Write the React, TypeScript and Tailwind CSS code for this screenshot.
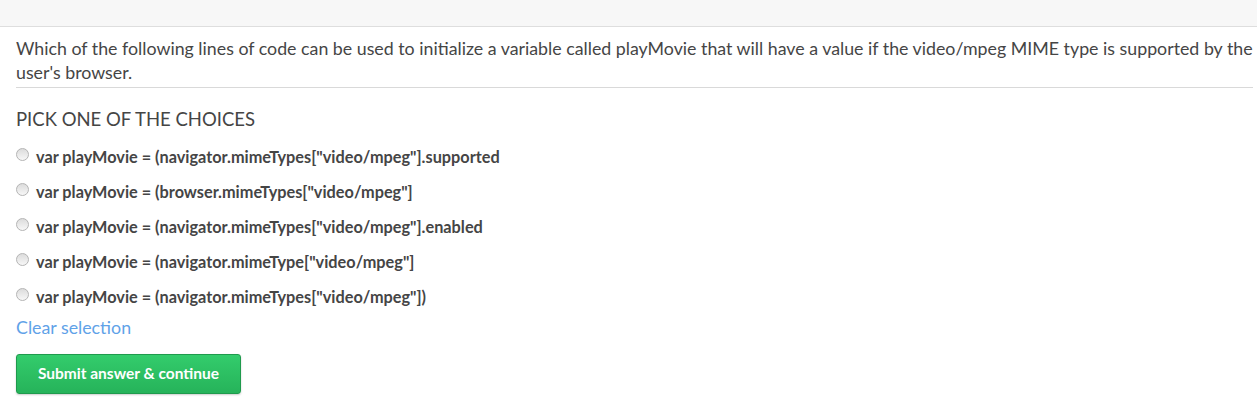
const choices = [
  'var playMovie = (navigator.mimeTypes["video/mpeg"].supported',
  'var playMovie = (browser.mimeTypes["video/mpeg"]',
  'var playMovie = (navigator.mimeTypes["video/mpeg"].enabled',
  'var playMovie = (navigator.mimeType["video/mpeg"]',
  'var playMovie = (navigator.mimeTypes["video/mpeg"])',
];

export default function App() {
  return (
    <div className="min-h-[416px] bg-white font-['Lato',sans-serif] text-[#454545]">
      <div className="h-[27px] border-b border-[#dedede] bg-[#f7f7f7]" />
      <div className="px-4 pr-1">
        <p className="pt-[9px] text-[17.8px] leading-6">
          Which of the following lines of code can be used to initialize a variable called playMovie that will have a value if the video/mpeg MIME type is supported by the user's browser.
        </p>
        <hr className="mt-[3px] border-t border-[#d9d9d9]" />
        <h3 className="mt-[21px] text-[18.5px] leading-5 uppercase">Pick one of the choices</h3>
        <div className="mt-[18px] flex flex-col gap-[15px]">
          {choices.map((c) => (
            <label key={c} className="flex h-5 items-center gap-[7px]">
              <span className="mb-[5px] h-[13px] w-[13px] shrink-0 rounded-full border border-[#b4b4b4] bg-gradient-to-b from-[#dcdcdc] to-[#f7f7f7]" />
              <span className="text-[16.3px] font-bold">{c}</span>
            </label>
          ))}
        </div>
        <a href="#" className="mt-[10px] block text-[17.8px] leading-5 text-[#5fa2e8]">
          Clear selection
        </a>
        <button className="mt-[17px] h-10 w-[225px] rounded-[3px] border border-[#1f9a4d] bg-gradient-to-b from-[#33cc6c] to-[#26b35a] text-[15.5px] font-bold text-white shadow-[0_1px_2px_rgba(0,0,0,0.2)]">
          Submit answer &amp; continue
        </button>
      </div>
    </div>
  );
}
